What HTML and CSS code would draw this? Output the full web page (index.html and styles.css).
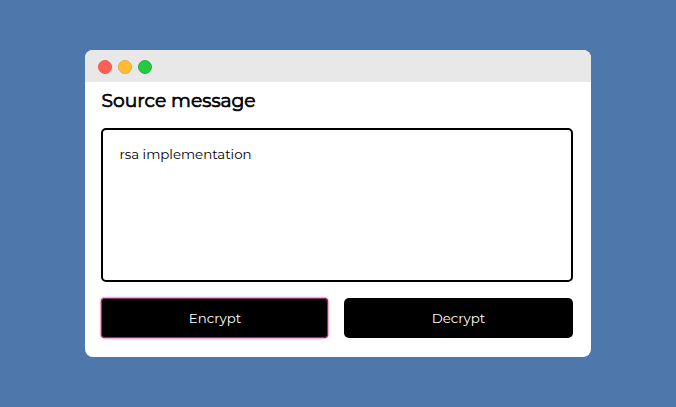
FILE: index.html
```html
<!DOCTYPE html>
<html lang="en">
<head>
<meta charset="utf-8">
<title>RSA</title>
<link rel="stylesheet" href="styles.css">
</head>
<body>
<main class="window">
  <header class="titlebar">
    <span class="dot close"></span>
    <span class="dot minimize"></span>
    <span class="dot expand"></span>
  </header>
  <section class="content">
    <h1 class="title">Source message</h1>
    <div class="message">rsa implementation</div>
    <div class="actions">
      <button class="button focused" type="button">Encrypt</button>
      <button class="button" type="button">Decrypt</button>
    </div>
  </section>
</main>
</body>
</html>
```
FILE: styles.css
```css
* { box-sizing: border-box; }

body {
  margin: 0;
  height: 407px;
  padding-top: 50px;
  background: #4e78ac;
  font-family: Montserrat, "Open Sans", sans-serif;
  color: #000;
}

.window {
  width: 506px;
  height: 307px;
  margin-left: 85px;
  border-radius: 8px;
  background: #fff;
  overflow: hidden;
}

.titlebar {
  height: 32px;
  padding: 2px 13px 0;
  display: flex;
  align-items: center;
  gap: 6px;
  background: #e8e8e8;
}

.dot {
  width: 14px;
  height: 14px;
  border-radius: 50%;
  border: 1px solid;
}

.close { background: #ff5f57; border-color: #f25850; }
.minimize { background: #febc2e; border-color: #e9a93a; }
.expand { background: #28c840; border-color: #23b43a; }

.content { padding: 4px 18px 0 16px; }

.title {
  margin: 0 0 12px;
  padding-left: 0.5px;
  height: 30px;
  font-size: 18.72px;
  line-height: 30px;
  font-weight: 400;
  -webkit-text-stroke: 0.7px #000;
}

.message {
  height: 154px;
  padding: 16px 16px 16px 16.4px;
  border: 2px solid #000;
  border-radius: 5px;
  font-size: 13.33px;
  line-height: 17px;
}

.actions {
  margin-top: 16px;
  display: grid;
  grid-template-columns: 227px 229px;
  gap: 16px;
}

.button {
  height: 40px;
  padding: 0;
  border: 0;
  border-radius: 5px;
  background: #000;
  color: #fff;
  font: 13.33px/17px Montserrat, "Open Sans", sans-serif;
}

.focused {
  padding-left: 1px;
  border-radius: 4px;
  box-shadow: 0 0 0 1px #f7a8dc, 0 0 0 2px #fdeaf7, inset 0 0 0 1px #83386a;
}
```
